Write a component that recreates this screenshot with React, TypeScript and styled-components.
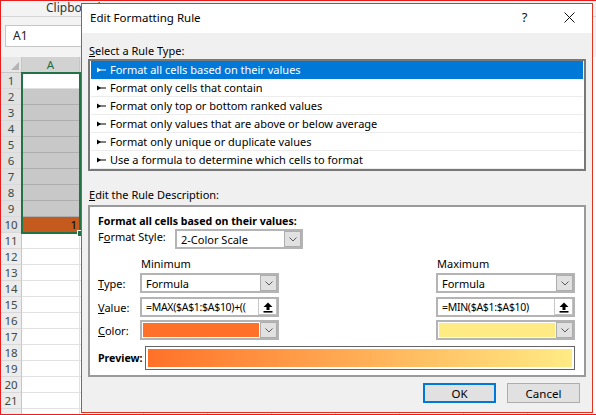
import styled, { createGlobalStyle } from "styled-components";

const GlobalStyle = createGlobalStyle`
  html, body { margin: 0; padding: 0; background: #fff; }
  body {
    font-family: "Noto Sans", "Open Sans", sans-serif;
    font-size: 11px;
    color: #000;
    overflow: hidden;
  }
  * { box-sizing: border-box; }
`;

const Screen = styled.div`
  position: relative;
  width: 596px;
  height: 415px;
  overflow: hidden;
  background: #f3f3f3;
  border-left: 1px solid #e81e1e;
  border-top: 1px solid #e81e1e;
  border-bottom: 1px solid #e81e1e;
`;

/* ---------- spreadsheet behind the dialog ---------- */

const Ribbon = styled.div`
  height: 16px;
  padding-left: 45px;
  border-bottom: 1px solid #d6d6d6;
  font-size: 12px;
  line-height: 13px;
  color: #333;
`;

const FormulaStrip = styled.div`
  height: 40px;
  padding: 8px 0 0 4px;
`;

const NameBox = styled.div`
  width: 100px;
  height: 22px;
  padding-left: 7px;
  background: #fff;
  border: 1px solid #c6c6c6;
  font-size: 12px;
  line-height: 20px;
  color: #222;
`;

const Sheet = styled.div`
  position: relative;
  background: #fff;
`;

const SheetRow = styled.div`
  display: flex;
  height: 16px;
`;

const Corner = styled.div`
  width: 21px;
  height: 16px;
  background: #e6e6e6;
  border-right: 1px solid #c6c6c6;
  border-bottom: 1px solid #c6c6c6;
  display: flex;
  align-items: flex-end;
  justify-content: flex-end;
  padding: 0 2px 2px 0;
`;

const ColHeader = styled.div<{ $w: number; $sel?: boolean }>`
  width: ${p => p.$w}px;
  flex: none;
  height: 16px;
  background: ${p => (p.$sel ? "#d2d2d2" : "#e6e6e6")};
  border-right: 1px solid #c6c6c6;
  border-bottom: 1px solid #c6c6c6;
  text-align: center;
  font-size: 11.5px;
  line-height: 15px;
  color: ${p => (p.$sel ? "#1e6b46" : "#444")};
`;

const RowHeader = styled.div<{ $sel?: boolean }>`
  width: 21px;
  flex: none;
  background: ${p => (p.$sel ? "#e1e1e1" : "#ececec")};
  border-right: 1px solid #c6c6c6;
  border-bottom: 1px solid #d8d8d8;
  text-align: center;
  font-size: 11.5px;
  line-height: 15px;
  color: #3c4a48;
`;

const Cell = styled.div<{ $w: number; $fill: string; $line: string }>`
  width: ${p => p.$w}px;
  flex: none;
  background: ${p => p.$fill};
  border-right: 1px solid #e1e1e1;
  border-bottom: 1px solid ${p => p.$line};
  text-align: right;
  padding-right: 2px;
  font-size: 11.5px;
  line-height: 15px;
`;

const Selection = styled.div`
  position: absolute;
  left: 20px;
  top: 15px;
  width: 60px;
  height: 162px;
  border: 2px solid #217346;
  pointer-events: none;
`;

const FillHandle = styled.div`
  position: absolute;
  right: -5px;
  bottom: -5px;
  width: 7px;
  height: 7px;
  background: #217346;
  border: 1px solid #fff;
`;

/* ---------- dialog ---------- */

const Dialog = styled.div`
  position: absolute;
  left: 80px;
  top: 2px;
  width: 512px;
  height: 410px;
  display: flex;
  flex-direction: column;
  background: #f0f0f0;
  border: 1px solid #e0321f;
  border-left-color: #9e5b4f;
`;

const TitleBar = styled.div`
  height: 29px;
  flex: none;
  display: flex;
  align-items: center;
  padding: 0 0 3px 8px;
  background: #fff;
  font-size: 11.5px;
`;

const TitleText = styled.div`
  flex: 1;
`;

const TitleButton = styled.div`
  width: 45px;
  display: flex;
  justify-content: center;
  font-size: 13px;
  color: #111;
`;

const Body = styled.div`
  flex: 1;
  display: flex;
  flex-direction: column;
  padding: 0 6px;
`;

const SectionLabel = styled.div<{ $top: number }>`
  padding: ${p => p.$top}px 0 0 1px;
  line-height: 16px;
  height: ${p => p.$top + 16}px;
  margin-bottom: ${p => (p.$top > 12 ? 2 : 0)}px;
`;

const ListBox = styled.div`
  height: 112px;
  padding: 0 1px;
  background: #fff;
  border: 2px solid #787878;
`;

const ListItem = styled.div<{ $sel?: boolean }>`
  height: 18px;
  display: flex;
  align-items: center;
  gap: 4px;
  padding: 1px 0 0 6px;
  line-height: 16px;
  background: ${p => (p.$sel ? "#0078d7" : "#fff")};
  color: ${p => (p.$sel ? "#fff" : "#000")};
  border-bottom: 1px solid ${p => (p.$sel ? "#0078d7" : "#ececec")};
  white-space: nowrap;
`;

const DescBox = styled.div`
  height: 172px;
  padding: 6px 9px 0 8px;
  background: #fff;
  border: 2px solid #9a9a9a;
`;

const Heading = styled.div`
  font-weight: 700;
  font-size: 10.6px;
  line-height: 16px;
`;

const StyleRow = styled.div`
  display: flex;
  height: 20px;
`;

const StyleLabel = styled.div`
  width: 77px;
  line-height: 16px;
`;

const FieldRow = styled.div<{ $gap: number; $h?: number }>`
  display: grid;
  grid-template-columns: 42px 139px 1fr 139px;
  align-items: center;
  height: ${p => p.$h ?? 20}px;
  margin-top: ${p => p.$gap}px;
`;

const ColTitle = styled.div<{ $col: number }>`
  grid-column: ${p => p.$col};
  padding-left: 1px;
  line-height: 16px;
`;

const Combo = styled.div<{ $w?: number; $col?: number }>`
  ${p => (p.$w ? `width: ${p.$w}px;` : "")}
  ${p => (p.$col ? `grid-column: ${p.$col};` : "")}
  height: 20px;
  display: flex;
  align-items: center;
  padding: 0 0 0 4px;
  background: #fff;
  border: 2px solid #b4b4b4;
  white-space: nowrap;
  overflow: hidden;
`;

const ComboText = styled.div<{ $mono?: boolean }>`
  flex: 1;
  overflow: hidden;
  font-size: ${p => (p.$mono ? "10.5px" : "11px")};
  letter-spacing: ${p => (p.$mono ? "-0.3px" : "0")};
`;

const Swatch = styled.div<{ $color: string }>`
  flex: 1;
  align-self: stretch;
  margin: 1px 1px 1px -3px;
  background: ${p => p.$color};
`;

const ChevronBox = styled.div`
  width: 17px;
  height: 16px;
  flex: none;
  display: flex;
  align-items: center;
  justify-content: center;
  background: #e1e1e1;
  border: 1px solid #adadad;
`;

const RefButton = styled.div`
  width: 19px;
  height: 16px;
  flex: none;
  display: flex;
  align-items: center;
  justify-content: center;
  background: #fff;
  border-left: 1px solid #c8c8c8;
  box-shadow: inset -1px -1px 0 #c0c0c0;
`;

const PreviewRow = styled.div`
  display: flex;
  align-items: center;
  height: 24px;
  margin-top: 6px;
`;

const PreviewLabel = styled.div`
  width: 47px;
  font-weight: 700;
  font-size: 10.6px;
`;

const PreviewBox = styled.div<{ $from: string; $to: string }>`
  flex: 1;
  height: 24px;
  padding: 2px;
  background: #fff;
  border: 1px solid #646464;
  &::after {
    content: "";
    display: block;
    height: 100%;
    background: linear-gradient(to right, ${p => p.$from}, ${p => p.$to});
  }
`;

const Buttons = styled.div`
  display: flex;
  justify-content: flex-end;
  gap: 11px;
  margin-top: 6px;
  padding-right: 6px;
`;

const Button = styled.div<{ $primary?: boolean }>`
  width: 73px;
  height: 20px;
  display: flex;
  align-items: center;
  justify-content: center;
  background: #e1e1e1;
  border: ${p => (p.$primary ? "2px solid #0078d7" : "1px solid #adadad")};
  font-size: 11.5px;
`;

const Chevron = () => (
  <svg width="8" height="5" viewBox="0 0 8 5">
    <path d="M0.5 0.5 L4 4 L7.5 0.5" fill="none" stroke="#5a5a5a" strokeWidth="1" />
  </svg>
);

const RuleArrow = ({ color }: { color: string }) => (
  <svg width="9" height="6" viewBox="0 0 9 6">
    <path d="M0 0.5 L4 3 L0 5.5 Z" fill={color} />
    <rect x="2" y="2.5" width="7" height="1" fill={color} />
  </svg>
);

const RefIcon = () => (
  <svg width="10" height="11" viewBox="0 0 10 11">
    <path d="M5 0.5 L9.5 5 L6.5 5 L6.5 8 L3.5 8 L3.5 5 L0.5 5 Z" fill="#000" />
    <rect x="0.5" y="9" width="9" height="1.6" fill="#000" />
  </svg>
);

const rules = [
  "Format all cells based on their values",
  "Format only cells that contain",
  "Format only top or bottom ranked values",
  "Format only values that are above or below average",
  "Format only unique or duplicate values",
  "Use a formula to determine which cells to format",
];

// columns B.. lie under the dialog, so their headers stay blank
const otherCols = [64, 64, 64, 64, 64, 64, 64, 64];

function cellFill(row: number) {
  if (row === 1) return { fill: "#fff", line: "#e1e1e1" };
  if (row >= 2 && row <= 9) return { fill: "#c8c8c8", line: "#adadad" };
  if (row === 10) return { fill: "#c55a1f", line: "#c55a1f" };
  return { fill: "#fff", line: "#e1e1e1" };
}

export default function App() {
  const rows = Array.from({ length: 22 }, (_, i) => i + 1);

  return (
    <>
      <GlobalStyle />
      <Screen>
        <Ribbon>Clipboard</Ribbon>
        <FormulaStrip>
          <NameBox>A1</NameBox>
        </FormulaStrip>

        <Sheet>
          <SheetRow>
            <Corner>
              <svg width="8" height="8" viewBox="0 0 8 8">
                <path d="M8 0 L8 8 L0 8 Z" fill="#b4b4b4" />
              </svg>
            </Corner>
            <ColHeader $w={58} $sel>A</ColHeader>
            {otherCols.map((w, i) => (
              <ColHeader key={i} $w={w} />
            ))}
          </SheetRow>
          {rows.map(r => {
            const c = cellFill(r);
            return (
              <SheetRow key={r}>
                <RowHeader $sel={r <= 10}>{r <= 21 ? r : ""}</RowHeader>
                <Cell $w={58} $fill={c.fill} $line={c.line}>{r === 10 ? "1" : ""}</Cell>
                {otherCols.map((w, i) => (
                  <Cell key={i} $w={w} $fill="#fff" $line="#e1e1e1" />
                ))}
              </SheetRow>
            );
          })}
          <Selection>
            <FillHandle />
          </Selection>
        </Sheet>

        <Dialog>
          <TitleBar>
            <TitleText>Edit Formatting Rule</TitleText>
            <TitleButton>?</TitleButton>
            <TitleButton>
              <svg width="11" height="11" viewBox="0 0 11 11">
                <path d="M0.5 0.5 L10.5 10.5 M10.5 0.5 L0.5 10.5" stroke="#111" strokeWidth="1" />
              </svg>
            </TitleButton>
          </TitleBar>

          <Body>
            <SectionLabel $top={10}><u>S</u>elect a Rule Type:</SectionLabel>
            <ListBox>
              {rules.map((r, i) => (
                <ListItem key={r} $sel={i === 0}>
                  <RuleArrow color={i === 0 ? "#fff" : "#000"} />
                  {r}
                </ListItem>
              ))}
            </ListBox>

            <SectionLabel $top={16}><u>E</u>dit the Rule Description:</SectionLabel>
            <DescBox>
              <Heading>Format all cells based on their values:</Heading>
              <StyleRow>
                <StyleLabel>F<u>o</u>rmat Style:</StyleLabel>
                <Combo $w={128}>
                  <ComboText>2-Color Scale</ComboText>
                  <ChevronBox><Chevron /></ChevronBox>
                </Combo>
              </StyleRow>

              <FieldRow $gap={7} $h={16}>
                <ColTitle $col={2}>Minimum</ColTitle>
                <ColTitle $col={4}>Maximum</ColTitle>
              </FieldRow>

              <FieldRow $gap={1}>
                <div><u>T</u>ype:</div>
                <Combo>
                  <ComboText>Formula</ComboText>
                  <ChevronBox><Chevron /></ChevronBox>
                </Combo>
                <Combo $col={4}>
                  <ComboText>Formula</ComboText>
                  <ChevronBox><Chevron /></ChevronBox>
                </Combo>
              </FieldRow>

              <FieldRow $gap={4}>
                <div><u>V</u>alue:</div>
                <Combo>
                  <ComboText $mono>=MAX($A$1:$A$10)+((</ComboText>
                  <RefButton><RefIcon /></RefButton>
                </Combo>
                <Combo $col={4}>
                  <ComboText $mono>=MIN($A$1:$A$10)</ComboText>
                  <RefButton><RefIcon /></RefButton>
                </Combo>
              </FieldRow>

              <FieldRow $gap={3}>
                <div><u>C</u>olor:</div>
                <Combo>
                  <Swatch $color="#ff7128" />
                  <ChevronBox><Chevron /></ChevronBox>
                </Combo>
                <Combo $col={4}>
                  <Swatch $color="#ffeb84" />
                  <ChevronBox><Chevron /></ChevronBox>
                </Combo>
              </FieldRow>

              <PreviewRow>
                <PreviewLabel>Preview:</PreviewLabel>
                <PreviewBox $from="#ff7128" $to="#ffeb84" />
              </PreviewRow>
            </DescBox>

            <Buttons>
              <Button $primary>OK</Button>
              <Button>Cancel</Button>
            </Buttons>
          </Body>
        </Dialog>
      </Screen>
    </>
  );
}
